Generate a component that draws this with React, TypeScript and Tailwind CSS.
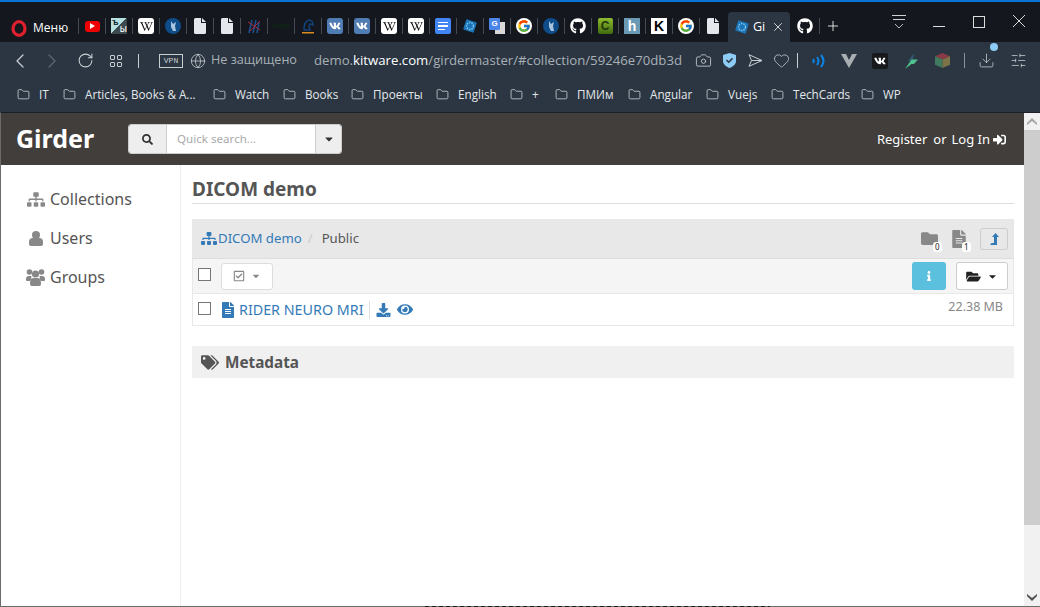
import React from "react";
import {
  FaSitemap,
  FaFileAlt,
  FaDownload,
  FaEye,
  FaTags,
  FaFolder,
  FaFolderOpen,
  FaInfo,
  FaRegCheckSquare,
  FaSignInAlt,
  FaSearch,
  FaCaretDown,
  FaVk,
  FaGithub,
  FaWikipediaW,
} from "react-icons/fa";
import { FcGoogle } from "react-icons/fc";
import {
  ChevronLeft,
  ChevronRight,
  RotateCw,
  Globe,
  Camera,
  Heart,
  Download,
  SlidersHorizontal,
  Folder,
  X,
  Plus,
} from "lucide-react";

const Wiki = () => (
  <div className="flex h-4 w-4 items-center justify-center rounded-[3px] bg-white text-black">
    <FaWikipediaW className="h-[13px] w-[13px]" />
  </div>
);

const Doc = () => (
  <svg width="12" height="16" viewBox="0 0 12 16">
    <path d="M0 1.500A1.500 1.500 0 0 1 1.500 0H7v5h5v9.500a1.500 1.500 0 0 1-1.500 1.500h-9A1.500 1.500 0 0 1 0 14.500zM8 0l4 4H8z" fill="#e4e8ec" />
  </svg>
);

const Kitware = () => (
  <svg width="16" height="16" viewBox="0 0 16 16">
    <circle cx="8" cy="8" r="8" fill="#0f4c8a" />
    <path d="M6 3l2 3 3-2-1 4 1 5H8L6 9z" fill="#a9c4de" />
  </svg>
);

const Vk = () => (
  <div className="flex h-4 w-4 items-center justify-center rounded-[3px] bg-[#4f7db3] text-white">
    <FaVk className="h-3 w-3" />
  </div>
);

const Google = () => (
  <div className="flex h-4 w-4 items-center justify-center rounded-full bg-white">
    <FcGoogle className="h-[14px] w-[14px]" />
  </div>
);

const GirderLogo = () => (
  <svg width="16" height="16" viewBox="0 0 16 16">
    <rect x="2.500" y="2.500" width="11" height="11" rx="1" transform="rotate(18 8 8)" fill="#1b75b8" />
    <circle cx="8" cy="8" r="3.500" fill="none" stroke="#7fc4ee" strokeWidth="1.400" strokeDasharray="1.500 1" />
  </svg>
);

const UserIcon = () => (
  <svg width="14" height="15" viewBox="0 0 14 15" fill="currentColor">
    <circle cx="7" cy="4" r="4" />
    <path d="M0 13v-2q0-4 4-4h6q4 0 4 4v2q0 2-2 2H2q-2 0-2-2z" />
  </svg>
);

const GroupIcon = () => (
  <svg width="19" height="17" viewBox="0 0 19 17" fill="currentColor">
    <circle cx="3.500" cy="3" r="2.800" />
    <circle cx="15.500" cy="3" r="2.800" />
    <circle cx="9.500" cy="5" r="3.600" />
    <path d="M0 10q0-3 3-3h2.500q-.5 1.500 0 3l-1.500 2H1q-1 0-1-1zM19 10q0-3-3-3h-2.500q.5 1.500 0 3l1.500 2h3q1 0 1-1z" />
    <path d="M4 14q0-5 4-5h3q4 0 4 5v1q0 2-2 2H6q-2 0-2-2z" />
  </svg>
);

const tabIcons: React.ReactNode[] = [
  <div className="flex h-[11px] w-[15px] items-center justify-center rounded-[3px] bg-[#f00000]">
    <div className="ml-[1px] h-0 w-0 border-y-[3px] border-l-[5px] border-y-transparent border-l-white" />
  </div>,
  <div className="relative h-4 w-4 bg-[linear-gradient(135deg,#b8e0e0_50%,#3c4a4e_50%)] font-['Liberation_Sans',sans-serif] leading-none">
    <span className="absolute top-0 left-[1px] text-[9px] font-bold text-[#10282c]">ъ</span>
    <span className="absolute right-0 bottom-0 text-[10px] text-white">ы</span>
  </div>,
  <Wiki />,
  <Kitware />,
  <Doc />,
  <Doc />,
  <svg width="14" height="16" viewBox="0 0 14 16">
    <path d="M2 15L5 2M6 15L9 2M10 15L12 4" stroke="#1c4f8c" strokeWidth="1.600" fill="none" />
    <path d="M1 4L13 12M13 3L3 13" stroke="#b0273a" strokeWidth="1" fill="none" />
  </svg>,
  <span className="font-['Liberation_Sans',sans-serif] text-[6px] font-bold tracking-tight text-[#0c2a12]">ААСФ</span>,
  <svg width="14" height="16" viewBox="0 0 14 16">
    <path d="M3 12C3 7 4 3 8 2c3 0 4 3 4 5l-3-1-1 2 1 4z" fill="none" stroke="#12427a" strokeWidth="1.500" />
    <rect x="1" y="14" width="12" height="1.500" fill="#d98a1e" />
  </svg>,
  <Vk />,
  <Vk />,
  <Wiki />,
  <Wiki />,
  <div className="flex h-4 w-4 flex-col justify-center gap-[2px] rounded-[2px] bg-[#4285f4] px-[3px]">
    <div className="h-[1.5px] w-full bg-white" />
    <div className="h-[1.5px] w-full bg-white" />
    <div className="h-[1.5px] w-2/3 bg-white" />
  </div>,
  <GirderLogo />,
  <div className="relative h-4 w-4">
    <div className="absolute right-0 bottom-0 h-3 w-[10px] bg-[#d8d8d8]" />
    <div className="absolute top-0 left-0 flex h-3 w-[11px] items-center justify-center rounded-[1px] bg-[#4a86e8] font-['Liberation_Sans',sans-serif] text-[8px] font-bold leading-none text-white">G</div>
  </div>,
  <Google />,
  <Kitware />,
  <FaGithub className="h-4 w-4 text-white" />,
  <div className="flex h-4 w-[15px] items-center justify-center rounded-[2px] bg-[linear-gradient(#8fbc2e,#3f6b10)] font-['Liberation_Sans',sans-serif] text-[12px] font-bold leading-none text-[#22360a]">C</div>,
  <div className="flex h-4 w-4 items-center justify-center bg-[#6b9ab4] font-['Liberation_Sans',sans-serif] text-[14px] font-bold leading-none text-white">h</div>,
  <div className="flex h-4 w-4 items-center justify-center bg-white font-['Liberation_Sans',sans-serif] text-[14px] font-black leading-none text-black">K</div>,
  <Google />,
  <Doc />,
];

const bookmarks = [
  { label: "IT", width: "w-[46px]" },
  { label: "Articles, Books & A...", width: "w-[150px]" },
  { label: "Watch", width: "w-[70px]" },
  { label: "Books", width: "w-[68px]" },
  { label: "Проекты", width: "w-[85px]" },
  { label: "English", width: "w-[74px]" },
  { label: "+", width: "w-[45px]" },
  { label: "ПМИм", width: "w-[73px]" },
  { label: "Angular", width: "w-[78px]" },
  { label: "Vuejs", width: "w-[65px]" },
  { label: "TechCards", width: "w-[90px]" },
  { label: "WP", width: "w-[60px]" },
];

function TabBar() {
  return (
    <div className="flex h-[42px] shrink-0 border-t-2 border-[#0a74d6] bg-[#14181e]">
      <div className="flex w-[78px] items-center pt-[12px] pl-[11px]">
        <svg width="16" height="17" viewBox="0 0 16 17">
          <ellipse cx="8" cy="8.500" rx="6" ry="6.800" fill="none" stroke="#e0202c" strokeWidth="3.200" />
        </svg>
        <span className="ml-[6px] font-['Open_Sans',sans-serif] text-[12px] text-white">Меню</span>
      </div>
      <div className="flex items-start pt-[16px]">
        {tabIcons.map((icon, i) => (
          <div key={i} className="flex h-4 w-[27px] items-center justify-center border-l border-[#454b52]">
            {icon}
          </div>
        ))}
      </div>
      <div className="mt-[10px] ml-[2px] flex h-[30px] w-[62px] items-center rounded-t-[4px] bg-[#2b3642] pl-[6px]">
        <GirderLogo />
        <span className="ml-[3px] w-[13px] overflow-hidden font-['Open_Sans',sans-serif] text-[12.5px] text-white">Gi</span>
        <X className="ml-[5px] h-[14px] w-[14px] text-[#e6e6e6]" strokeWidth={1.500} />
      </div>
      <div className="flex items-start pt-[16px]">
        <div className="flex h-4 w-[30px] items-center justify-center border-r border-[#454b52] pl-[1px]">
          <FaGithub className="h-4 w-4 text-white" />
        </div>
        <div className="flex h-4 w-[25px] items-center justify-center">
          <Plus className="h-[16px] w-[16px] text-[#e6e6e6]" strokeWidth={1.400} />
        </div>
      </div>
      <div className="ml-auto flex pr-[15px]">
        <div className="mr-[1px] flex flex-col items-center gap-[3px] pt-[13px]">
          <div className="h-px w-[14px] bg-[#d0d0d0]" />
          <div className="h-px w-[12px] bg-[#d0d0d0]" />
          <svg width="10" height="5" viewBox="0 0 10 5" className="mt-[1px]">
            <path d="M1 0l4 4 4-4" stroke="#bbb" fill="none" />
          </svg>
        </div>
        <div className="mt-[24px] ml-[26px] h-px w-[12px] bg-[#dcdcdc]" />
        <div className="mt-[14px] ml-[28px] h-[12px] w-[12px] border border-[#dcdcdc]" />
        <svg width="12" height="12" viewBox="0 0 12 12" className="mt-[13px] ml-[28px]">
          <path d="M0 0l12 12M12 0L0 12" stroke="#dcdcdc" />
        </svg>
      </div>
    </div>
  );
}

function AddressBar() {
  return (
    <div className="flex h-[37px] shrink-0 items-center bg-[#2b3642] text-[#c9ced3]">
      <div className="flex w-[40px] justify-center"><ChevronLeft className="h-[24px] w-[24px]" strokeWidth={1.300} /></div>
      <div className="flex w-[24px] justify-center"><ChevronRight className="h-[24px] w-[24px] text-[#5e6770]" strokeWidth={1.300} /></div>
      <div className="flex w-[42px] justify-center"><RotateCw className="h-[17px] w-[17px]" strokeWidth={1.500} /></div>
      <div className="flex w-[20px] justify-center">
        <div className="grid grid-cols-2 gap-[2px]">
          <div className="h-[5px] w-[5px] rounded-[1px] border border-[#c9ced3]" />
          <div className="h-[5px] w-[5px] rounded-[1px] border border-[#c9ced3]" />
          <div className="h-[5px] w-[5px] rounded-[1px] border border-[#c9ced3]" />
          <div className="h-[5px] w-[5px] rounded-[1px] border border-[#c9ced3]" />
        </div>
      </div>
      <div className="ml-[12px] h-[14px] w-px bg-[#c9ced3]" />
      <div className="ml-[20px] flex h-[14px] w-[24px] items-center justify-center border border-[#c9ced3] font-['Liberation_Mono',monospace] text-[8px] leading-none">VPN</div>
      <Globe className="ml-[7px] h-[16px] w-[16px]" strokeWidth={1.200} />
      <span className="ml-[5px] w-[103px] whitespace-nowrap font-['Open_Sans',sans-serif] text-[12.6px] text-[#a9b0b6]">Не защищено</span>
      <span className="w-[377px] overflow-hidden whitespace-nowrap font-['Open_Sans',sans-serif] text-[13.2px] text-[#a9b0b6]">
        demo.<span className="text-white">kitware.com</span>/girdermaster/#collection/59246e70db3d
      </span>
      <div className="flex w-[24px] justify-center"><Camera className="h-[17px] w-[17px]" strokeWidth={1.200} /></div>
      <div className="flex w-[28px] justify-center">
        <svg width="13" height="15" viewBox="0 0 13 15">
          <path d="M6.500 0L13 2v6c0 3.500-3 5.500-6.500 7C3 13.500 0 11.500 0 8V2z" fill="#8dcdf5" />
          <path d="M3.500 7l2.200 2.200 3.800-3.800" stroke="#2b3642" strokeWidth="1.500" fill="none" />
        </svg>
      </div>
      <div className="flex w-[24px] justify-center">
        <svg width="15" height="13" viewBox="0 0 15 13" fill="none" stroke="#c9ced3">
          <path d="M1 .7l13 5.800-13 5.800 2.500-5.800zM3.500 6.500H14" />
        </svg>
      </div>
      <div className="flex w-[28px] justify-center"><Heart className="h-[17px] w-[17px]" strokeWidth={1.100} /></div>
      <div className="ml-[2px] h-[15px] w-px bg-[#c9ced3]" />
      <div className="ml-[8px] flex w-[24px] justify-center">
        <svg width="15" height="14" viewBox="0 0 15 14" fill="none" stroke="#0a84e8" strokeWidth="2">
          <path d="M2 5q1.500 2 0 4M6 3q3 4 0 8M10 1q5 6 0 12" />
        </svg>
      </div>
      <div className="ml-[7px] flex w-[24px] justify-center">
        <svg width="16" height="14" viewBox="0 0 16 14"><path d="M0 0h5l3 6 3-6h5L8 14z" fill="#a9aeb3" /></svg>
      </div>
      <div className="ml-[7px] flex w-[24px] justify-center">
        <div className="flex h-4 w-4 items-center justify-center rounded-[2px] bg-[#17191c] text-white"><FaVk className="h-3 w-3" /></div>
      </div>
      <div className="ml-[7px] flex w-[24px] justify-center">
        <svg width="13" height="16" viewBox="0 0 13 16">
          <path d="M9 0L3 8h5z" fill="#34566e" />
          <path d="M13 6.500H6.500L0 16l6.500-5H9z" fill="#4fc08d" />
        </svg>
      </div>
      <div className="ml-[7px] flex w-[24px] justify-center">
        <svg width="15" height="15" viewBox="0 0 14 14">
          <path d="M7 0l7 3-7 3-7-3z" fill="#8a3a46" />
          <path d="M0 3l7 3v8l-7-3z" fill="#3f7a5e" />
          <path d="M14 3l-7 3v8l7-3z" fill="#7a7448" />
        </svg>
      </div>
      <div className="ml-[10px] h-[15px] w-px bg-[#8a9199]" />
      <div className="relative ml-[9px] flex w-[24px] justify-center">
        <Download className="h-[17px] w-[17px]" strokeWidth={1.100} />
        <div className="absolute top-[-9px] right-[0px] h-2 w-2 rounded-full bg-[#8dcdf5]" />
      </div>
      <div className="ml-[8px] flex w-[24px] justify-center"><SlidersHorizontal className="h-[17px] w-[17px]" strokeWidth={1.100} /></div>
    </div>
  );
}

function BookmarksBar() {
  return (
    <div className="flex h-[33px] shrink-0 items-center bg-[#2b3642] pb-[2px] pl-[17px] font-['Open_Sans',sans-serif] text-[11.7px] text-[#e3e7ea]">
      {bookmarks.map((b) => (
        <div key={b.label} className={`flex items-center gap-[9px] whitespace-nowrap ${b.width}`}>
          <Folder className="h-[13px] w-[13px] shrink-0" strokeWidth={1.300} />
          <span>{b.label}</span>
        </div>
      ))}
    </div>
  );
}

function Header() {
  return (
    <div className="flex h-[52px] shrink-0 items-center bg-[#423e3c] pr-[18px] pl-[15px] text-white">
      <span className="mb-[2px] w-[112px] text-[25px] leading-none font-bold">Girder</span>
      <div className="flex h-[30px] w-[214px] overflow-hidden rounded-[3px] border border-[#ccc] text-[#333]">
        <div className="flex w-[38px] items-center justify-center border-r border-[#ccc] bg-[#eee]">
          <FaSearch className="h-[11px] w-[11px]" />
        </div>
        <div className="flex flex-1 items-center bg-white pl-[10px] text-[11.6px] text-[#aaa]">Quick search...</div>
        <div className="flex w-[26px] items-center justify-center border-l border-[#ccc] bg-[#eee]">
          <FaCaretDown className="h-[12px] w-[12px]" />
        </div>
      </div>
      <div className="mt-[1px] ml-auto flex items-center text-[13px]">
        <span>Register</span>
        <span className="ml-[6px]">or</span>
        <span className="ml-[5px]">Log In</span>
        <FaSignInAlt className="ml-[3px] h-[13px] w-[13px]" />
      </div>
    </div>
  );
}

function Sidebar() {
  const items = [
    { label: "Collections", icon: <FaSitemap className="h-[15px] w-[18px]" /> },
    { label: "Users", icon: <UserIcon /> },
    { label: "Groups", icon: <GroupIcon /> },
  ];
  return (
    <div className="flex w-[180px] shrink-0 flex-col gap-[17px] border-r border-[#eee] pt-[23px] pl-[24px]">
      {items.map((item) => (
        <div key={item.label} className="flex h-[22px] items-center text-[16px] text-[#555]">
          <div className="flex w-[25px] justify-center pr-[4px] text-[#888]">{item.icon}</div>
          {item.label}
        </div>
      ))}
    </div>
  );
}

function Content() {
  return (
    <div className="flex-1 pr-[10px] pl-[11px]">
      <div className="mt-[12px] flex h-[27px] items-center border-b border-[#ddd] pb-[2px] text-[19px] font-bold text-[#555]">
        DICOM demo
      </div>
      <div className="mt-[15px] flex h-[40px] items-center border-b border-[#ddd] bg-[#e8e8e8] pr-[6px] pl-[9px] text-[13.2px]">
        <FaSitemap className="h-[13px] w-[16px] text-[#337ab7]" />
        <span className="ml-[1px] text-[#337ab7]">DICOM demo</span>
        <span className="ml-[6px] text-[#ccc]">/</span>
        <span className="ml-[9px] text-[#555]">Public</span>
        <div className="relative ml-auto text-[#888]">
          <FaFolder className="h-[17px] w-[17px]" />
          <span className="absolute top-[12px] left-[12px] rounded-[3px] bg-white px-[2px] text-[8px] leading-[10px] text-[#222]">0</span>
        </div>
        <div className="relative ml-[14px] text-[#888]">
          <FaFileAlt className="h-[18px] w-[14px]" />
          <span className="absolute top-[12px] left-[10px] rounded-[3px] bg-white px-[2px] text-[8px] leading-[10px] text-[#222]">1</span>
        </div>
        <div className="ml-[14px] flex h-[22px] w-[28px] items-center justify-center rounded-[3px] border border-[#ccc] text-[#337ab7]">
          <svg width="9" height="12" viewBox="0 0 9 12">
            <path d="M5.500 0L9 4H7v8H0l1.500-2H4V4H2z" fill="currentColor" />
          </svg>
        </div>
      </div>
      <div className="flex h-[35px] items-center border-x border-b border-[#e8e8e8] bg-[#f5f5f5] pr-[5px] pl-[5px]">
        <div className="mb-[3px] h-[13px] w-[13px] border border-[#767676] bg-white" />
        <div className="ml-[10px] flex h-[27px] w-[52px] items-center justify-center gap-[6px] rounded-[3px] border border-[#ddd] bg-white text-[#888]">
          <FaRegCheckSquare className="h-[12px] w-[12px]" />
          <FaCaretDown className="h-[10px] w-[10px]" />
        </div>
        <div className="ml-auto flex h-[28px] w-[34px] items-center justify-center rounded-[3px] bg-[#5bc0de] text-white">
          <FaInfo className="h-[10px] w-[6px]" />
        </div>
        <div className="ml-[10px] flex h-[28px] w-[52px] items-center justify-center gap-[6px] rounded-[3px] border border-[#ccc] bg-white text-[#222]">
          <FaFolderOpen className="h-[13px] w-[15px]" />
          <FaCaretDown className="h-[11px] w-[11px]" />
        </div>
      </div>
      <div className="flex h-[32px] items-center border-x border-b border-[#e8e8e8] pr-[10px] pl-[5px] text-[14.3px]">
        <div className="mb-[3px] h-[13px] w-[13px] border border-[#767676] bg-white" />
        <FaFileAlt className="ml-[11px] h-[16px] w-[12px] text-[#337ab7]" />
        <span className="ml-[5px] text-[#337ab7]">RIDER NEURO MRI</span>
        <div className="ml-[6px] h-[18px] w-px bg-[#ddd]" />
        <FaDownload className="ml-[6px] h-[14px] w-[15px] text-[#337ab7]" />
        <FaEye className="ml-[6px] h-[15px] w-[16px] text-[#337ab7]" />
        <span className="mb-[4px] ml-auto text-[12.5px] text-[#888]">22.38 MB</span>
      </div>
      <div className="mt-[20px] flex h-[32px] items-center bg-[#f0f0f0] pl-[9px] text-[15.3px] font-bold text-[#555]">
        <FaTags className="h-[15px] w-[18px]" />
        <span className="ml-[6px]">Metadata</span>
      </div>
    </div>
  );
}

function Scrollbar() {
  return (
    <div className="flex w-[16px] shrink-0 flex-col bg-[#f1f1f1]">
      <div className="flex h-[17px] items-center justify-center text-[#a3a3a3]">
        <svg width="10" height="7" viewBox="0 0 10 7"><path d="M0 5l5-5 5 5v2L5 3 0 7z" fill="currentColor" /></svg>
      </div>
      <div className="h-[395px] bg-[#cdcdcd]" />
      <div className="mt-auto flex h-[17px] items-center justify-center text-[#505050]">
        <svg width="10" height="7" viewBox="0 0 10 7"><path d="M0 2l5 5 5-5V0L5 4 0 0z" fill="currentColor" /></svg>
      </div>
    </div>
  );
}

export default function App() {
  return (
    <div className="flex h-[607px] w-[1040px] flex-col overflow-hidden bg-white font-['Noto_Sans',sans-serif]">
      <TabBar />
      <AddressBar />
      <BookmarksBar />
      <div className="flex min-h-0 flex-1 border-t border-l border-t-[#1b2027] border-l-[#6b6b6b]">
        <div className="flex min-w-0 flex-1 flex-col">
          <Header />
          <div className="flex min-h-0 flex-1">
            <Sidebar />
            <Content />
          </div>
        </div>
        <Scrollbar />
      </div>
      {/* bottom window edge, the next page's heading just peeks through */}
      <div className="h-px shrink-0 bg-[#6b6b6b]">
        <div className="ml-[425px] h-px w-[345px] bg-[repeating-linear-gradient(90deg,#1a1a1a_0,#1a1a1a_4px,#6b6b6b_4px,#6b6b6b_7px)]" />
      </div>
    </div>
  );
}
